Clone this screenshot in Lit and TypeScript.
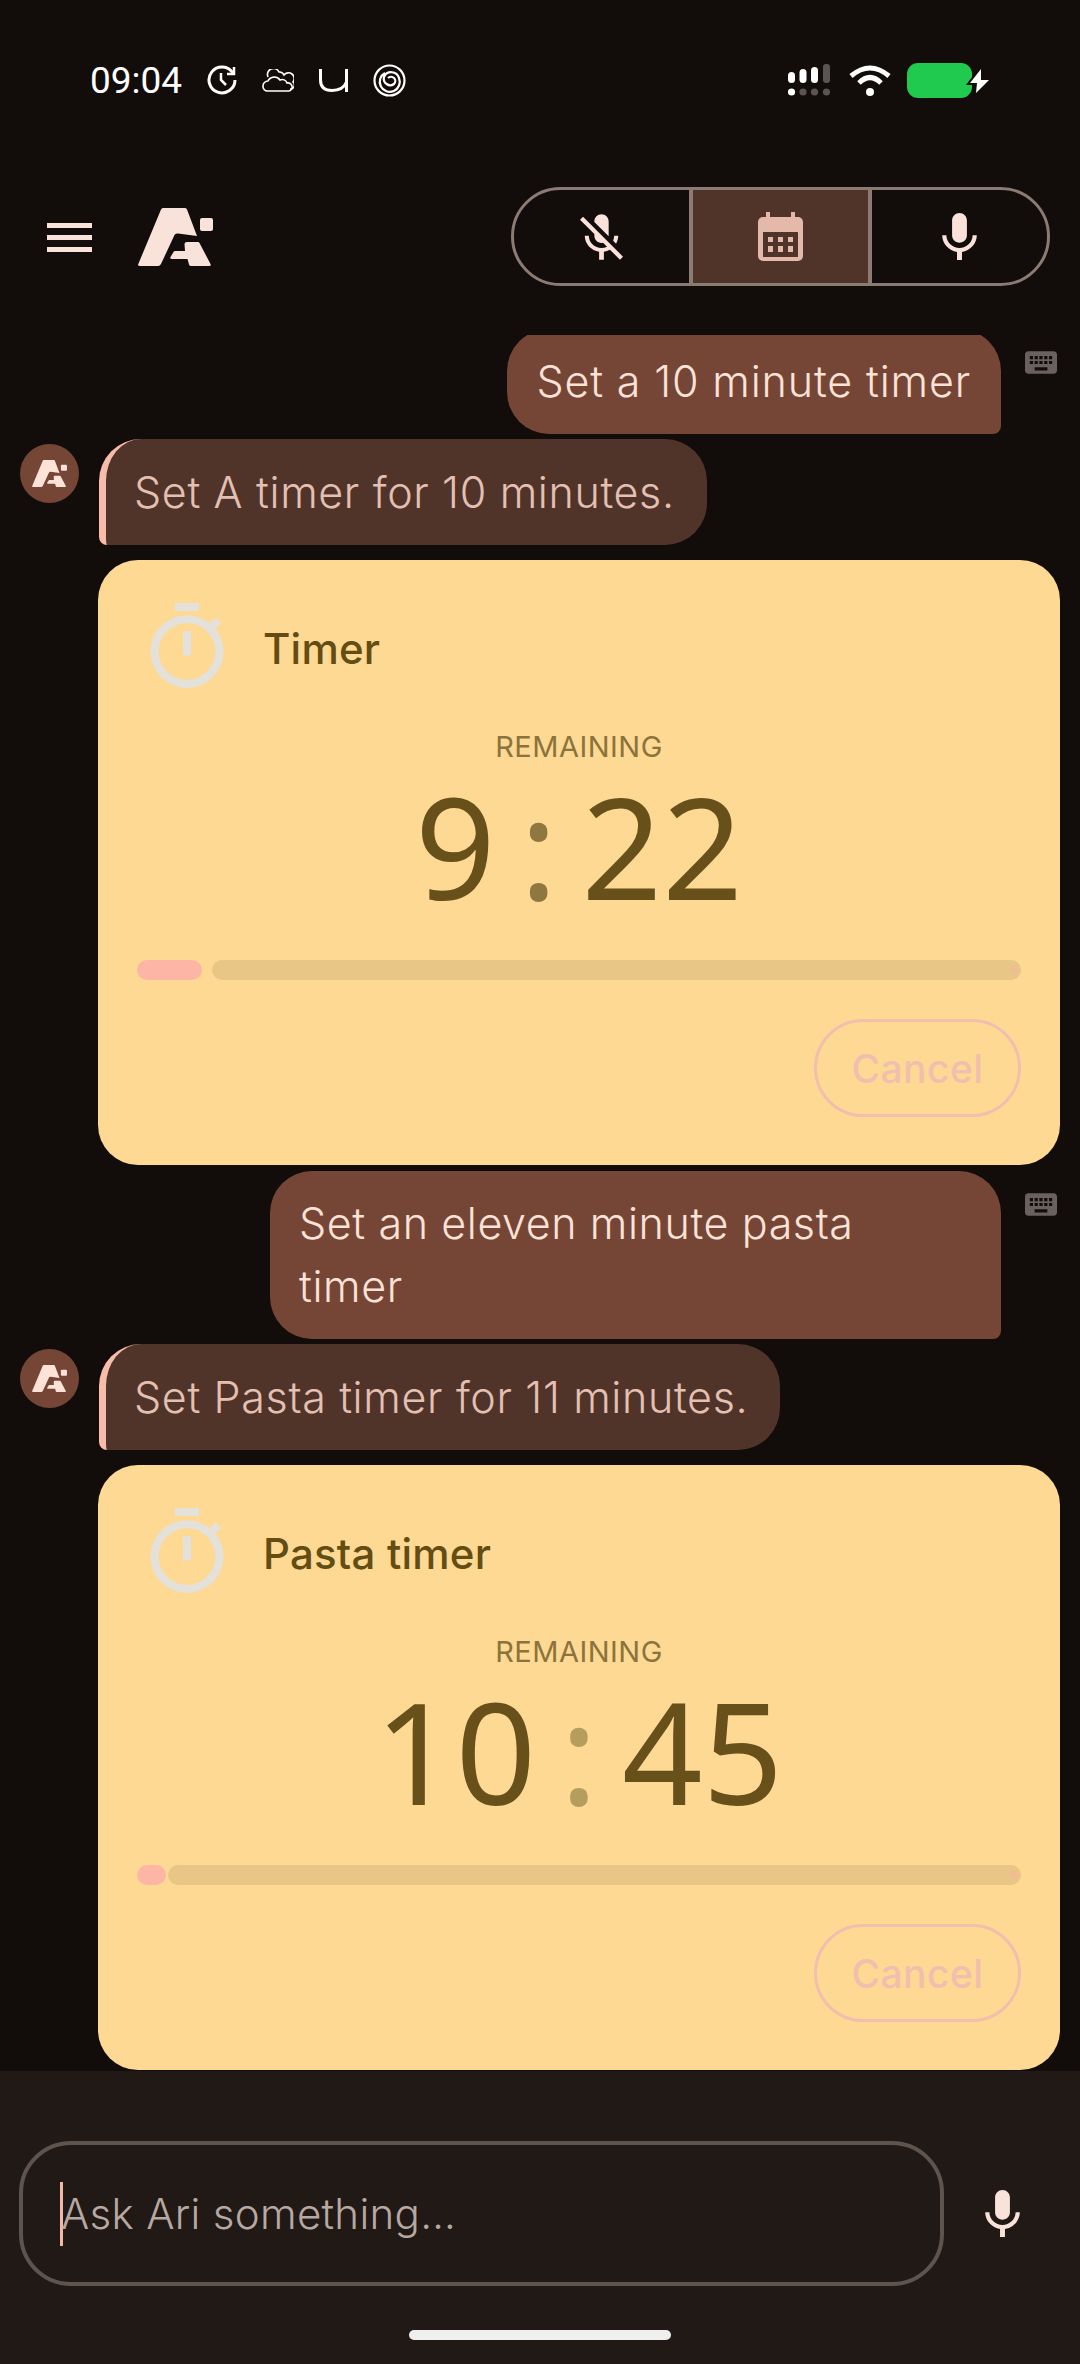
import { LitElement, html, css, svg } from "lit";
import { customElement } from "lit/decorators.js";

const logoPaths = svg`
  <path d="M23 1.5Q23.6 0 25 0H47Q48.5 0 49 1.5L59 28L40 25.5Q37.5 25 36.5 27L23 56Q22 58 20 58H2Q-.6 58 .3 56Z"/>
  <path d="M49 34H60Q61 34 61.5 35L72.5 56Q73.5 58 71 58H53Q51.5 58 51 56.5L49.5 51H34Q31.5 51 32.5 49L35.5 44Q36 43 37 43H47L46.5 36Q46.5 34 49 34Z"/>
  <rect x="62" y="10" width="13" height="13" rx="2"/>
`;

const micPath = "M12 14c1.66 0 3-1.34 3-3V5c0-1.66-1.34-3-3-3S9 3.34 9 5v6c0 1.66 1.34 3 3 3zm5.3-3c0 3-2.54 5.1-5.3 5.1S6.7 14 6.7 11H5c0 3.42 2.72 6.23 6 6.72V21h2v-3.28c3.28-.48 6-3.3 6-6.72h-1.7z";
const micOffPath = "M19 11h-1.7c0 .74-.16 1.43-.43 2.05l1.23 1.23c.56-.98.9-2.09.9-3.28zm-4.02.17c0-.06.02-.11.02-.17V5c0-1.66-1.34-3-3-3S9 3.34 9 5v.18l5.98 5.99zM4.27 3L3 4.27l6.01 6.01V11c0 1.66 1.33 3 2.99 3 .22 0 .44-.03.65-.08l1.66 1.66c-.71.33-1.5.52-2.31.52-2.76 0-5.3-2.1-5.3-5.1H5c0 3.41 2.72 6.23 6 6.72V21h2v-3.28c.91-.13 1.77-.45 2.54-.9L19.73 21 21 19.73 4.27 3z";
const keyboardPath = "M20 5H4c-1.1 0-1.99.9-1.99 2L2 17c0 1.1.9 2 2 2h16c1.1 0 2-.9 2-2V7c0-1.1-.9-2-2-2zm-9 3h2v2h-2V8zm0 3h2v2h-2v-2zM8 8h2v2H8V8zm0 3h2v2H8v-2zm-1 2H5v-2h2v2zm0-3H5V8h2v2zm9 7H8v-2h8v2zm0-4h-2v-2h2v2zm0-3h-2V8h2v2zm3 3h-2v-2h2v2zm0-3h-2V8h2v2z";
const stopwatchPath = "M15 1H9v2h6V1zm-4 13h2V8h-2v6zm8.03-6.61l1.42-1.42c-.43-.51-.9-.99-1.41-1.41l-1.42 1.42C16.07 4.74 14.12 4 12 4c-4.97 0-9 4.03-9 9s4.02 9 9 9 9-4.03 9-9c0-2.12-.74-4.07-1.97-5.61zM12 20c-3.87 0-7-3.13-7-7s3.13-7 7-7 7 3.13 7 7-3.13 7-7 7z";

@customElement("timer-card")
export class TimerCard extends LitElement {
  static properties = {
    name: {},
    minutes: {},
    seconds: {},
    elapsed: { type: Number },
    gap: { type: Number },
    dim: { type: Boolean },
  };

  declare name: string;
  declare minutes: string;
  declare seconds: string;
  declare elapsed: number;
  declare gap: number;
  declare dim: boolean;

  static styles = css`
    :host {
      display: block;
      margin: 15px 20px 0 98px;
    }
    .card {
      background: #fdd994;
      border-radius: 40px;
      padding: 43px 39px 48px;
      height: 605px;
      box-sizing: border-box;
      color: #644d12;
      display: flex;
      flex-direction: column;
    }
    .head {
      display: flex;
      align-items: center;
      gap: 39px;
      padding-left: 13px;
      height: 85px;
    }
    .head svg {
      width: 74px;
      height: 85px;
      fill: #e3e1da;
    }
    .title {
      font-size: 42px;
      font-weight: 500;
      letter-spacing: 0.2px;
      margin-top: 5px;
    }
    .label {
      margin-top: 41px;
      text-align: center;
      font-size: 29px;
      line-height: 36px;
      font-weight: 400;
      letter-spacing: 0.5px;
      color: #8b733c;
    }
    .time {
      display: flex;
      justify-content: center;
      gap: 24px;
      height: 161px;
      font-family: "Noto Sans", sans-serif;
      font-size: 141px;
      font-weight: 400;
      letter-spacing: 0;
      line-height: 161px;
      color: #67501a;
    }
    .colon {
      color: #8f7740;
    }
    .colon.dim {
      color: #b59d5e;
    }
    .progress {
      display: flex;
      height: 20px;
      margin-top: 34px;
    }
    .done {
      background: #fdb6a6;
      border-radius: 10px;
    }
    .track {
      position: relative;
      flex: 1;
      background: #e8c686;
      border-radius: 10px;
    }
    .stop {
      position: absolute;
      right: 3px;
      top: 6px;
      width: 8px;
      height: 8px;
      border-radius: 50%;
      background: #f0bc95;
    }
    .actions {
      display: flex;
      justify-content: flex-end;
      margin-top: 39px;
    }
    .cancel {
      width: 207px;
      height: 98px;
      box-sizing: border-box;
      border: 3px solid #f2bfae;
      border-radius: 49px;
      color: #f2bfae;
      font-size: 39px;
      font-weight: 500;
      letter-spacing: 0.4px;
      display: flex;
      align-items: center;
      justify-content: center;
    }
  `;

  render() {
    return html`
      <div class="card">
        <div class="head">
          <svg viewBox="3 1 18 21"><path d=${stopwatchPath}></path></svg>
          <span class="title">${this.name}</span>
        </div>
        <div class="label">REMAINING</div>
        <div class="time">
          <span>${this.minutes}</span>
          <span class="colon ${this.dim ? "dim" : ""}">:</span>
          <span>${this.seconds}</span>
        </div>
        <div class="progress" style="gap:${this.gap}px">
          <div class="done" style="width:${this.elapsed}px"></div>
          <div class="track"><div class="stop"></div></div>
        </div>
        <div class="actions"><div class="cancel">Cancel</div></div>
      </div>
    `;
  }
}

@customElement("app-root")
export class AppRoot extends LitElement {
  static styles = css`
    :host {
      display: block;
      width: 1080px;
      height: 2364px;
      background: #120c0a;
      font-family: "Inter", "Noto Sans", sans-serif;
      overflow: hidden;
    }
    .page {
      display: flex;
      flex-direction: column;
      height: 2364px;
    }

    /* status bar */
    .status {
      height: 160px;
      flex: none;
      display: flex;
      align-items: center;
      padding: 0 90px 0 90px;
      box-sizing: border-box;
      color: #fff;
    }
    .clock {
      font-family: "Roboto", sans-serif;
      font-size: 37px;
      font-weight: 400;
      width: 117px;
    }
    .status-left {
      display: flex;
      align-items: center;
      flex: 1;
    }
    .status-left svg {
      fill: none;
      stroke: #fff;
    }
    .status-left svg + svg {
      margin-left: 25px;
    }
    .status-right {
      display: flex;
      align-items: center;
    }
    .wifi {
      margin-left: 19px;
      fill: none;
      stroke: #fff;
    }
    .battery {
      margin-left: 16px;
    }

    /* top bar */
    .topbar {
      height: 175px;
      flex: none;
      display: flex;
      align-items: flex-start;
      padding: 27px 30px 0 47px;
      box-sizing: border-box;
    }
    .menu {
      width: 45px;
      display: flex;
      flex-direction: column;
      gap: 7px;
      margin-top: 36px;
    }
    .menu i {
      display: block;
      height: 5px;
      background: #f9e2da;
    }
    .logo {
      width: 75px;
      height: 58px;
      fill: #f9e2da;
      margin: 21px 0 0 46px;
    }
    .segments {
      margin-left: auto;
      display: flex;
      height: 99px;
      width: 539px;
      box-sizing: border-box;
      border: 3px solid #8b7b73;
      border-radius: 50px;
      overflow: hidden;
    }
    .seg {
      flex: 1;
      display: flex;
      align-items: center;
      justify-content: center;
      fill: #f9e2da;
    }
    .seg.active {
      flex: none;
      width: 183px;
      background: #513429;
      border-left: 4px solid #8b7b73;
      border-right: 4px solid #8b7b73;
      box-sizing: border-box;
    }

    /* conversation */
    .chat {
      flex: none;
      height: 1736px;
      overflow: hidden;
      font-size: 43px;
      font-weight: 300;
      line-height: 63px;
    }
    .user-row {
      display: flex;
      justify-content: flex-end;
      align-items: flex-start;
      gap: 24px;
      padding-right: 23px;
      margin-top: 6px;
    }
    .user-row.first {
      margin-top: -6px;
    }
    .bubble-user {
      background: #754636;
      color: #fde2d8;
      padding: 21px 30px 21px 29px;
      letter-spacing: 0.85px;
      border-radius: 42px 42px 8px 42px;
    }
    .bubble-user.wide {
      width: 731px;
      box-sizing: border-box;
      padding-right: 130px;
      letter-spacing: 0.6px;
    }
    .kbd {
      width: 32px;
      height: 23px;
      margin-top: 22px;
      fill: #6a6060;
    }
    .agent-row {
      display: flex;
      align-items: flex-start;
      gap: 20px;
      padding-left: 20px;
      margin-top: 5px;
    }
    .avatar {
      width: 59px;
      height: 59px;
      margin-top: 5px;
      border-radius: 50%;
      background: #754636;
      display: flex;
      align-items: center;
      justify-content: center;
      fill: #fde2d8;
    }
    .avatar svg {
      width: 37px;
      height: 27px;
    }
    .bubble-agent {
      background: #513429;
      color: #e4c0b3;
      padding: 22px 32px 21px 28px;
      letter-spacing: 0.65px;
      border-left: 7px solid #f8bcab;
      border-radius: 42px 42px 42px 8px;
    }

    /* input panel */
    .panel {
      flex: 1;
      background: #211915;
      display: flex;
      flex-direction: column;
      align-items: center;
    }
    .input-row {
      align-self: stretch;
      display: flex;
      align-items: center;
      padding: 70px 0 0 19px;
    }
    .input {
      width: 925px;
      height: 145px;
      box-sizing: border-box;
      border: 4px solid #5f534d;
      border-radius: 52px;
      display: flex;
      align-items: center;
      padding-left: 37px;
      font-size: 42px;
      font-weight: 300;
      letter-spacing: 0.3px;
      color: #b8a8a2;
    }
    .caret {
      width: 3px;
      height: 64px;
      margin-right: -2px;
      background: #f3b8a2;
    }
    .input-mic {
      width: 35px;
      height: 47px;
      fill: #f9e2da;
      margin-left: 41px;
    }
    .home {
      width: 262px;
      height: 10px;
      border-radius: 5px;
      background: #efefef;
      margin-top: 44px;
    }
  `;

  private statusLeft() {
    return html`
      <svg width="30" height="30" viewBox="0 0 30 30" stroke-width="3">
        <path d="M26 8A13 13 0 1 0 28 15"></path>
        <path d="M27 2V9H20" stroke-width="2.5"></path>
        <path d="M14 8V15L19 20" stroke-width="2.5"></path>
      </svg>
      <svg width="32" height="23" viewBox="0 0 32 23" stroke-width="1.6">
        <path d="M6 8A6 6 0 0 1 17 3A5 5 0 0 1 22 6A5.5 5.5 0 0 1 31 13A4 4 0 0 1 28 20"></path>
        <path d="M6 22A4.5 4.5 0 0 1 1 17A5 5 0 0 1 6 12A7 7 0 0 1 18 11A5 5 0 0 1 25 14A4 4 0 0 1 27 22Z"></path>
      </svg>
      <svg width="29" height="24" viewBox="0 0 29 24" stroke-width="3">
        <path d="M1.5 1V12Q1.5 22.5 13 22.5Q24 22.5 27.5 14V24M27.5 14V1"></path>
      </svg>
      <svg width="33" height="33" viewBox="0 0 33 33" stroke-width="2.2">
        <circle cx="16.5" cy="16.5" r="15"></circle>
        <path d="M12 9A10 10 0 1 0 26 14A8 8 0 0 0 11 13A6.5 6.5 0 0 0 21 20A4 4 0 0 0 15 14"></path>
      </svg>
    `;
  }

  private statusRight() {
    return html`
      <svg width="42" height="32" viewBox="0 0 42 32">
        <g fill="#fff">
          <rect x="0" y="8" width="7" height="11" rx="3.5"></rect>
          <rect x="11.5" y="5" width="7" height="14" rx="3.5"></rect>
          <rect x="23" y="3" width="7" height="16" rx="3.5"></rect>
          <circle cx="3.5" cy="28" r="3.6"></circle>
        </g>
        <g fill="#5a5554">
          <rect x="35" y="0" width="7" height="19" rx="3"></rect>
          <circle cx="15" cy="28" r="3.6"></circle>
          <circle cx="26.5" cy="28" r="3.6"></circle>
          <circle cx="38.5" cy="28" r="3.6"></circle>
        </g>
      </svg>
      <svg class="wifi" width="42" height="32" viewBox="0 0 42 32" stroke-width="5">
        <path d="M2 12Q21 -4 40 12"></path>
        <path d="M10 19Q21 8 32 19"></path>
        <circle cx="21" cy="28" r="4" fill="#fff" stroke="none"></circle>
      </svg>
      <svg class="battery" width="83" height="35" viewBox="0 0 83 35">
        <rect x="0" y="0" width="65" height="35" rx="11" fill="#1fca4f"></rect>
        <path d="M74 6L63 20H70L69 30L82 17H74Z" fill="#fff" stroke="#120c0a" stroke-width="4" paint-order="stroke"></path>
      </svg>
    `;
  }

  render() {
    return html`
      <div class="page">
        <div class="status">
          <div class="status-left">
            <span class="clock">09:04</span>
            ${this.statusLeft()}
          </div>
          <div class="status-right">${this.statusRight()}</div>
        </div>

        <div class="topbar">
          <div class="menu"><i></i><i></i><i></i></div>
          <svg class="logo" viewBox="0 0 75 58">${logoPaths}</svg>
          <div class="segments">
            <div class="seg">
              <svg width="43" height="46" viewBox="3 2 18 19"><path d=${micOffPath}></path></svg>
            </div>
            <div class="seg active">
              <svg width="45" height="49" viewBox="0 0 45 49">
                <rect x="8" y="0" width="4" height="8" fill="#e4b9aa"></rect>
                <rect x="33" y="0" width="4" height="8" fill="#e4b9aa"></rect>
                <rect x="0" y="5" width="45" height="44" rx="5" fill="#e4b9aa"></rect>
                <rect x="5" y="20" width="35" height="25" fill="#513429"></rect>
                <g fill="#e4b9aa">
                  <rect x="10" y="25" width="5" height="5"></rect>
                  <rect x="20" y="25" width="5" height="5"></rect>
                  <rect x="30" y="25" width="5" height="5"></rect>
                  <rect x="10" y="34" width="5" height="6"></rect>
                  <rect x="20" y="34" width="5" height="6"></rect>
                  <rect x="30" y="34" width="5" height="6"></rect>
                </g>
              </svg>
            </div>
            <div class="seg">
              <svg width="35" height="47" viewBox="5 2 14 19"><path d=${micPath}></path></svg>
            </div>
          </div>
        </div>

        <div class="chat">
          <div class="user-row first">
            <div class="bubble-user">Set a 10 minute timer</div>
            <svg class="kbd" viewBox="2 5 20 14"><path d=${keyboardPath}></path></svg>
          </div>
          <div class="agent-row">
            <div class="avatar"><svg viewBox="0 0 75 58">${logoPaths}</svg></div>
            <div class="bubble-agent">Set A timer for 10 minutes.</div>
          </div>
          <timer-card name="Timer" minutes="9" seconds="22" elapsed="65" gap="10"></timer-card>

          <div class="user-row">
            <div class="bubble-user wide">Set an eleven minute pasta timer</div>
            <svg class="kbd" viewBox="2 5 20 14"><path d=${keyboardPath}></path></svg>
          </div>
          <div class="agent-row">
            <div class="avatar"><svg viewBox="0 0 75 58">${logoPaths}</svg></div>
            <div class="bubble-agent">Set Pasta timer for 11 minutes.</div>
          </div>
          <timer-card name="Pasta timer" minutes="10" seconds="45" elapsed="29" gap="2" dim></timer-card>
        </div>

        <div class="panel">
          <div class="input-row">
            <div class="input"><span class="caret"></span><span>Ask Ari something…</span></div>
            <svg class="input-mic" viewBox="5 2 14 19"><path d=${micPath}></path></svg>
          </div>
          <div class="home"></div>
        </div>
      </div>
    `;
  }
}
